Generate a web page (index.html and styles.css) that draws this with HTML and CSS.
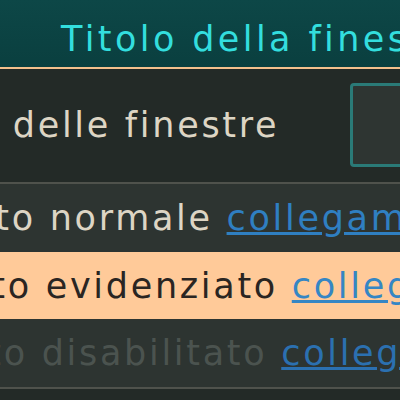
FILE: index.html
```html
<!DOCTYPE html>
<html lang="it">
  <head>
    <meta charset="UTF-8" />
    <meta name="viewport" content="width=device-width, initial-scale=1.0" />
    <title>Anteprima tema</title>
    <link rel="stylesheet" href="styles.css">
  </head>
  <body>
    <div class="window">
      <div class="titlebar">
        <span class="title">Titolo della finestra</span>
      </div>
      <div class="content">
        <div class="field-row">
          <span class="label">Sfondo delle finestre</span>
          <div class="entry"></div>
        </div>
        <div class="rows">
          <div class="row normal">
            <span class="text">Testo normale <a href="#">collegamento</a></span>
          </div>
          <div class="row selected">
            <span class="text">Testo evidenziato <a href="#">collegamento</a></span>
          </div>
          <div class="row disabled">
            <span class="text">Testo disabilitato <a href="#">collegamento</a></span>
          </div>
        </div>
      </div>
    </div>
  </body>
</html>
```

FILE: styles.css
```css
body {
  margin: 0;
  background: #232a27;
  font-family: "DejaVu Sans", sans-serif;
  font-size: 35px;
  letter-spacing: 2.7px;
  overflow: hidden;
}
.window {
  width: 400px;
  height: 400px;
  overflow: hidden;
}
.titlebar {
  height: 48px;
  padding: 19px 0 0 61px;
  background: linear-gradient(#0d4747, #0a3f3f);
  border-bottom: 2px solid #f4c08c;
  white-space: nowrap;
}
.title {
  color: #33dede;
  letter-spacing: 3.4px;
}
.content {
  background: #232a27;
}
.field-row {
  display: flex;
  align-items: center;
  height: 83px;
  padding: 14px 0 16px;
  white-space: nowrap;
}
.label {
  color: #ddd5c4;
  margin-left: -139px;
  flex: none;
}
.entry {
  flex: none;
  width: 120px;
  height: 78px;
  margin-left: auto;
  margin-right: -76px;
  background: #2e3532;
  border: 3px solid #2a7a77;
  border-radius: 4px;
}
.rows {
  border-top: 2px solid #4f524c;
  border-bottom: 2px solid #4f524c;
}
.row {
  display: flex;
  align-items: center;
  height: 68px;
  background: #2d3431;
  color: #ddd5c4;
  white-space: nowrap;
}
.row .text {
  margin-left: -72px;
}
.row.normal .text {
  margin-left: -68px;
}
.row a {
  color: #2f7fc1;
  text-decoration: underline;
}
.row.selected {
  height: 67px;
  background: #ffca99;
  color: #2a2522;
}
.row.selected a {
  color: #3586c4;
}
.row.disabled {
  color: #4b534f;
}
.row.disabled .text {
  margin-left: -76px;
}
.row.disabled a {
  color: #2b70b0;
}
```
